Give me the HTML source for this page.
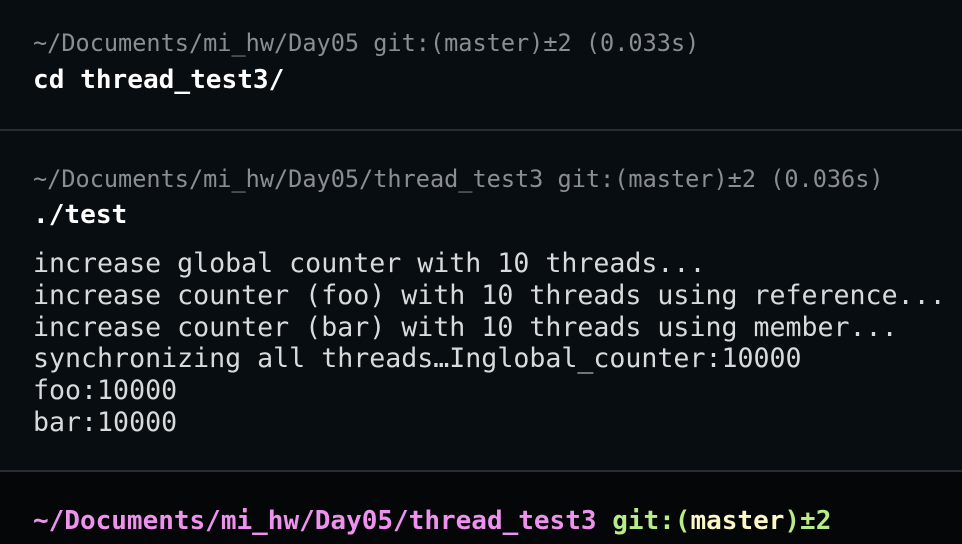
<!DOCTYPE html>
<html><head><style>
html,body{margin:0;padding:0;}
body{width:962px;height:544px;background:#080d12;overflow:hidden;position:relative;font-family:"DejaVu Sans Mono","Liberation Mono",monospace;}
.l{position:absolute;left:33px;white-space:pre;line-height:1;}
.p{color:#8b8e91;font-size:23.55px;}
.c{color:#fff;font-weight:bold;font-size:26.1px;}
.o{color:#d8dadb;font-size:26.6px;}
.sep{position:absolute;left:0;width:962px;height:2px;background:#2a2e31;}
.bot{position:absolute;left:0;top:472px;width:962px;height:72px;background:#050608;}
.pk{color:#ee92ee;font-weight:bold;}
.gr{color:#b8ec88;font-weight:bold;}
.yl{color:#fdf6c6;font-weight:bold;}
</style></head><body>
<div class="l p" style="top:32px">~/Documents/mi_hw/Day05 git:(master)±2 (0.033s)</div>
<div class="l c" style="top:67px">cd thread_test3/</div>
<div class="sep" style="top:129px"></div>
<div class="l p" style="top:168px">~/Documents/mi_hw/Day05/thread_test3 git:(master)±2 (0.036s)</div>
<div class="l c" style="top:202px">./test</div>
<div class="l o" style="top:251px">increase global counter with 10 threads...</div>
<div class="l o" style="top:283px">increase counter (foo) with 10 threads using reference...</div>
<div class="l o" style="top:315px">increase counter (bar) with 10 threads using member...</div>
<div class="l o" style="top:346px">synchronizing all threads…Inglobal_counter:10000</div>
<div class="l o" style="top:378px">foo:10000</div>
<div class="l o" style="top:410px">bar:10000</div>
<div class="bot"></div>
<div class="sep" style="top:470px"></div>
<div class="l" style="top:508px;font-size:26px"><span class="pk">~/Documents/mi_hw/Day05/thread_test3</span> <span class="gr">git:(</span><span class="yl">master</span><span class="gr">)±2</span></div>
</body></html>
